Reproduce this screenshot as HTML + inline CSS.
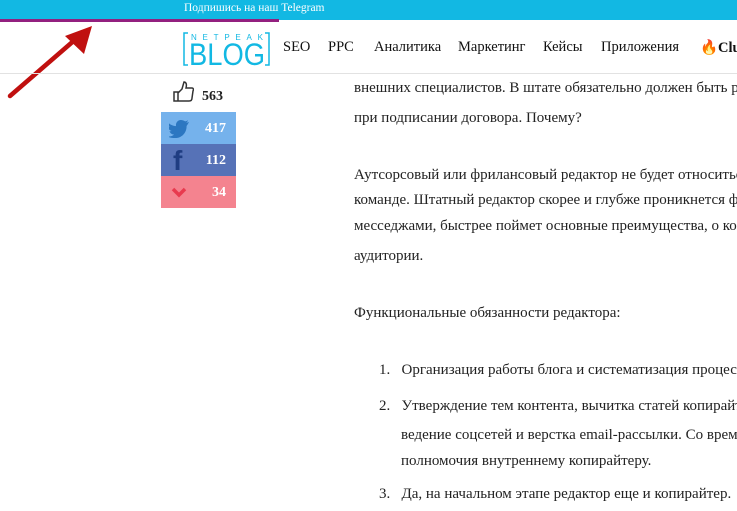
<!DOCTYPE html>
<html><head><meta charset="utf-8"><style>
body{margin:0;width:737px;height:511px;overflow:hidden;background:#fff;font-family:"Liberation Serif",serif;position:relative;color:#222}
.top{position:absolute;left:0;top:0;width:737px;height:20px;background:#12b8e3;color:#fff;font-size:11.5px;line-height:17px}
.top span{position:absolute;left:184px;top:0}
.pl{position:absolute;left:0;top:19px;width:279px;height:3px;background:#93207f}
.hd{position:absolute;left:0;top:73px;width:737px;height:1px;background:#e2e2e2}
.nav{position:absolute;top:39px;font-size:14.5px;color:#111;white-space:nowrap}
.t{position:absolute;left:354px;font-size:15px;white-space:nowrap;color:#222}
.s{position:absolute;left:161px;width:75px;height:32px;color:#fff;font-weight:bold;font-size:14px;overflow:hidden}
.s b{position:absolute;right:10px;top:9px}
</style></head><body>
<div class="top"><span>Подпишись на наш Telegram</span></div>
<div class="pl"></div>
<svg style="position:absolute;left:5px;top:20px" width="95" height="80"><line x1="5" y1="76" x2="72" y2="18" stroke="#c0100f" stroke-width="4.5" stroke-linecap="round"/><polygon points="87,6 60,16 79,34" fill="#c0100f"/></svg>
<svg style="position:absolute;left:183px;top:30px" width="88" height="38">
<path d="M5 3H1V35H5M82 3H86V35H82" stroke="#12b8e3" stroke-width="1.5" fill="none"/>
<text x="8" y="10" font-family="Liberation Sans" font-size="8" fill="#12b8e3" textLength="72" lengthAdjust="spacing">NETPEAK</text>
<text x="0" y="0" font-family="Liberation Sans" font-size="24" fill="#12b8e3" transform="translate(6,35) scale(1,1.3)" textLength="76" lengthAdjust="spacingAndGlyphs">BLOG</text></svg>
<div class="nav" style="left:283px">SEO</div>
<div class="nav" style="left:328px">PPC</div>
<div class="nav" style="left:374px">Аналитика</div>
<div class="nav" style="left:458px">Маркетинг</div>
<div class="nav" style="left:543px">Кейсы</div>
<div class="nav" style="left:601px">Приложения</div>
<div class="nav" style="left:700px;font-weight:bold">🔥Club</div>
<div class="hd"></div>
<svg style="position:absolute;left:172px;top:80px" width="22" height="24"><path d="M2 12h4v9H2zM6 13l4-4 2-7c2 0 3 2 2 6h6c1 0 2 1 1 3l-1 7c0 2-1 3-3 3H6" fill="none" stroke="#333" stroke-width="1.5"/></svg>
<div style="position:absolute;left:202px;top:89px;font-weight:bold;font-size:14px">563</div>
<div class="s" style="top:112px;background:#75b2ec"><svg style="position:absolute;left:8px;top:8px" width="22" height="18"><path d="M21 2c-1 .5-2 .8-3 .9 1-.6 1.7-1.5 2-2.6-1 .6-2 1-3 1.2C15.5.5 14 0 12.5 0 9.6 0 7.3 2.4 7.3 5.3c0 .4 0 .8.1 1.2C3.2 6.3-.2 4.2-2 1.2c1 2.5 1 4.5 3 5.8-.8 0-1.6-.3-2.3-.6 0 2.6 1.8 4.7 4.2 5.2-1 .3-1.5.3-2.4.1.7 2.1 2.6 3.6 4.9 3.7C3.5 17 1 17.6-1.5 17.3 .8 18.8 3.6 19 6.5 19c7.8 0 12-6.5 12-12.1v-.6C19.5 5 20.4 3.5 21 2z" transform="scale(.95)" fill="#2c77c1"/></svg><b>417</b></div>
<div class="s" style="top:144px;background:#5672b7"><span style="position:absolute;left:12px;top:1px;color:#1f3d82;font-size:28px;font-weight:bold;font-family:'Liberation Sans'">f</span><b>112</b></div>
<div class="s" style="top:176px;background:#f4838f"><svg style="position:absolute;left:10px;top:10px" width="16" height="12"><path d="M2 3l6 6 6-6" stroke="#e83a4e" stroke-width="3.5" fill="none"/></svg><b>34</b></div>
<div class="t" style="top:80px">внешних специалистов. В штате обязательно должен быть редактор</div>
<div class="t" style="top:110px">при подписании договора. Почему?</div>
<div class="t" style="top:167px">Аутсорсовый или фрилансовый редактор не будет относиться к</div>
<div class="t" style="top:192px">команде. Штатный редактор скорее и глубже проникнется ф</div>
<div class="t" style="top:218px">месседжами, быстрее поймет основные преимущества, о ко</div>
<div class="t" style="top:248px">аудитории.</div>
<div class="t" style="top:305px">Функциональные обязанности редактора:</div>
<div class="t" style="top:362px;left:379px">1.&nbsp;&nbsp;&nbsp;Организация работы блога и систематизация процес</div>
<div class="t" style="top:398px;left:379px">2.&nbsp;&nbsp;&nbsp;Утверждение тем контента, вычитка статей копирайт</div>
<div class="t" style="top:427px;left:401px">ведение соцсетей и верстка email-рассылки. Со време</div>
<div class="t" style="top:453px;left:401px">полномочия внутреннему копирайтеру.</div>
<div class="t" style="top:486px;left:379px">3.&nbsp;&nbsp;&nbsp;Да, на начальном этапе редактор еще и копирайтер.</div>
</body></html>
